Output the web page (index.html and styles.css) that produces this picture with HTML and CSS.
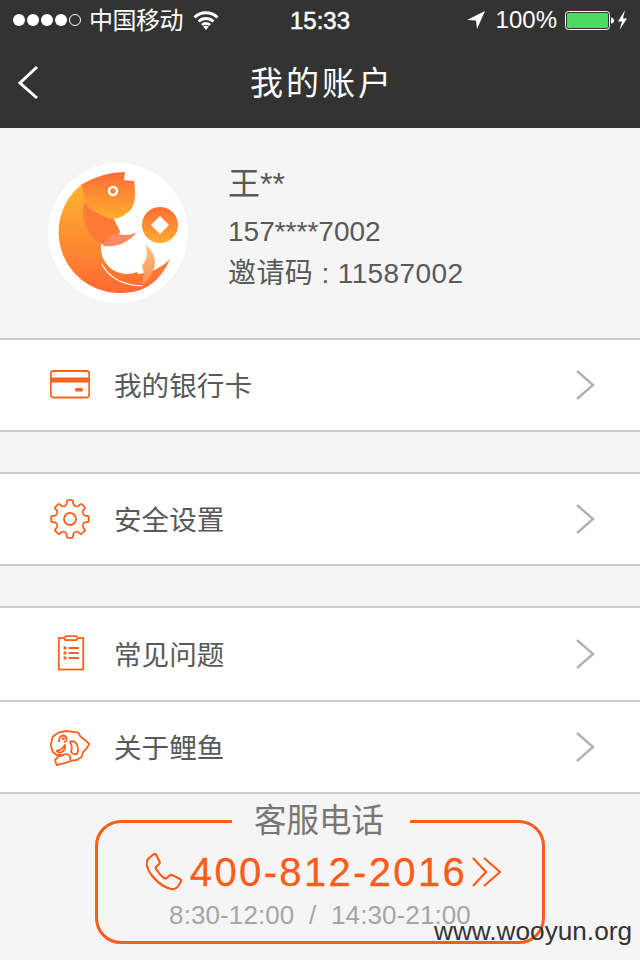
FILE: index.html
```html
<!DOCTYPE html>
<html lang="zh-CN">
<head>
    <meta charset="UTF-8">
    <title>我的账户</title>
    <link rel="stylesheet" href="styles.css">
</head>
<body>

<header class="top">
    <div class="status">
        <div class="status-left">
            <span class="dot"></span><span class="dot"></span><span class="dot"></span><span class="dot"></span><span class="dot empty"></span>
            <span class="carrier">中国移动</span>
            <svg class="wifi" width="26" height="20" viewBox="0 0 26 20">
                <path d="M1.5 7.5a16.5 16.5 0 0 1 23 0" />
                <path d="M5.5 11.5a11 11 0 0 1 15 0" />
                <path d="M9 15a6 6 0 0 1 8 0" />
                <polygon class="fill" points="13,20 10.2,16.6 13,15.4 15.8,16.6" />
            </svg>
        </div>
        <div class="time">15:33</div>
        <div class="status-right">
            <svg width="20" height="20" viewBox="0 0 20 20">
                <polygon class="fill" points="1,10 19,1 11,19 10,10.5" />
            </svg>
            <span class="percent">100%</span>
            <svg width="64" height="22" viewBox="0 0 64 22">
                <rect class="batt" x="0.5" y="2.5" width="44" height="18" rx="3" />
                <rect class="batt-level" x="2" y="4" width="41" height="15" rx="1.5" />
                <path class="fill" d="M46 8.5q3 .5 3 3t-3 3z" />
                <polygon class="fill" points="60,1 53,12.5 57,12.5 54.5,21 62,9.5 58,9.5" />
            </svg>
        </div>
    </div>
    <div class="nav">
        <svg class="back" width="22" height="36" viewBox="0 0 22 36">
            <polyline points="19,2 2,18 19,33" />
        </svg>
        <h1>我的账户</h1>
    </div>
</header>

<section class="profile">
    <svg class="avatar" width="140" height="140" viewBox="0 0 140 140">
        <defs>
            <linearGradient id="bodyGrad" x1="0" y1="0" x2="0" y2="1">
                <stop offset="0" stop-color="#ffb22e" />
                <stop offset="1" stop-color="#ff6a33" />
            </linearGradient>
            <linearGradient id="headGrad" x1="0" y1="0" x2="0" y2="1">
                <stop offset="0" stop-color="#ff6c38" />
                <stop offset="1" stop-color="#ffae2e" />
            </linearGradient>
            <linearGradient id="coinGrad" x1="0" y1="0" x2="0" y2="1">
                <stop offset="0" stop-color="#ff6c35" />
                <stop offset="1" stop-color="#ffac2e" />
            </linearGradient>
            <linearGradient id="finGrad" x1="0" y1="0" x2="0" y2="1">
                <stop offset="0" stop-color="#ffc58c" />
                <stop offset="1" stop-color="#ff8a45" />
            </linearGradient>
        </defs>
        <circle cx="70" cy="70" r="70" fill="#fff" />
        <path fill="url(#bodyGrad)" d="M33.700 21.300A61 61 0 0 0 78.700 129.700Q108 128 122 96.300Q108 110 90 111L60 60Z" />
        <circle cx="79" cy="85" r="26" fill="#fff" />
        <path fill="url(#finGrad)" d="M97 81Q110 92 106 105Q102 118 92 123Q98 112 94 103Q102 92 97 81Z" />
        <path fill="none" stroke="#fff" stroke-width="1.200" d="M53.700 101Q65 122 95 123" />
        <path fill="#ff7a35" d="M36 40C32 60 44 83 64 83C68 83 70 76 72 68L60 45Z" />
        <path fill="#ff8a62" d="M55 83Q75 85 88.700 69.700Q76 74 68 70Q58 74 55 83Z" />
        <path fill="url(#headGrad)" d="M33.700 21.300Q55 9 77 9L76 17L86 18C89 35 86 46 79 50Q70 58 60 55Q42 48 37 40Z" />
        <circle cx="65" cy="28" r="4" fill="none" stroke="#fff" stroke-width="2.400" />
        <circle cx="112" cy="62" r="18" fill="url(#coinGrad)" />
        <polygon fill="#fff" points="112,53 121,62 112,71 103,62" />
    </svg>
    <div class="info">
        <div class="name">王**</div>
        <div class="phone">157****7002</div>
        <div class="code">邀请码 : 11587002</div>
    </div>
</section>

<div class="group">
    <a class="row">
        <svg class="icon" width="40" height="40" viewBox="0 0 40 40">
            <rect x="0.8" y="6" width="38.4" height="26.5" rx="2.5" />
            <rect class="orange" x="1" y="12.5" width="38" height="5" />
            <rect class="orange" x="25" y="23" width="8" height="3.5" rx="1.5" />
        </svg>
        <span class="label">我的银行卡</span>
        <svg class="arrow" width="20" height="32" viewBox="0 0 20 32">
            <polyline points="2,2 18,16 2,30" />
        </svg>
    </a>
</div>

<div class="group">
    <a class="row">
        <svg class="icon" width="40" height="40" viewBox="0 0 40 40">
            <defs>
                <path id="tooth" d="M14.6 7.1Q16.2 6.2 16.6 5L17 2Q17 1.2 18 1.2L22 1.2Q23 1.2 23 2L23.4 5Q23.8 6.2 25.4 7.1" />
            </defs>
            <use href="#tooth" />
            <use href="#tooth" transform="rotate(45 20 20)" />
            <use href="#tooth" transform="rotate(90 20 20)" />
            <use href="#tooth" transform="rotate(135 20 20)" />
            <use href="#tooth" transform="rotate(180 20 20)" />
            <use href="#tooth" transform="rotate(225 20 20)" />
            <use href="#tooth" transform="rotate(270 20 20)" />
            <use href="#tooth" transform="rotate(315 20 20)" />
            <circle cx="20" cy="20" r="6" />
        </svg>
        <span class="label">安全设置</span>
        <svg class="arrow" width="20" height="32" viewBox="0 0 20 32">
            <polyline points="2,2 18,16 2,30" />
        </svg>
    </a>
</div>

<div class="group">
    <a class="row row-first">
        <svg class="icon" width="40" height="40" viewBox="0 0 40 40">
            <rect x="8.8" y="4" width="24.4" height="31.5" />
            <rect class="clip" x="14.5" y="2.2" width="13" height="4" rx="2" />
            <circle class="orange" cx="15" cy="14" r="1.7" />
            <circle class="orange" cx="15" cy="19" r="1.7" />
            <circle class="orange" cx="15" cy="24" r="1.7" />
            <path d="M18.5 14H29M18.5 19H29M18.5 24H29" />
        </svg>
        <span class="label">常见问题</span>
        <svg class="arrow" width="20" height="32" viewBox="0 0 20 32">
            <polyline points="2,2 18,16 2,30" />
        </svg>
    </a>
    <a class="row">
        <svg class="icon doodle" width="40" height="40" viewBox="0 -3 40 40">
            <path d="M.7 15L2.700 6.700L8.300 2.700L16.700 1L28.300 2.700L30.700 6.700L35 10L39.300 14L36.700 18.300L33.300 21.700L31.700 26.700L26.700 30L21.700 30.700L16.700 32.700L6.700 35L5 30L8.300 26.700L13.300 25L6.700 25L2.700 21.700Z" />
            <path d="M9 12Q9 6 13 5.500Q17 6 16.500 10Q16 12 14 12M12 9.500Q13.500 7.500 14.500 9.500" />
            <path d="M6.700 20.700Q12 20 15 15Q16 20 11 22.500Q8 23 6.700 20.700Z" />
            <path d="M20 11.700Q25 10 27 15Q29 20 27 24Q23 25 21 22Q23 17 20 11.700Z" />
            <path d="M10 26Q15 23 19 25Q21 27 20 30" />
        </svg>
        <span class="label">关于鲤鱼</span>
        <svg class="arrow" width="20" height="32" viewBox="0 0 20 32">
            <polyline points="2,2 18,16 2,30" />
        </svg>
    </a>
</div>

<section class="service">
    <h2>客服电话</h2>
    <div class="tel">
        <svg class="tel-icon" width="37" height="38" viewBox="0 0 37 38">
            <path d="M3 5C1 7 0 9 1 13C3 21 13 33 25 36C29 37 31 35 33 32L35 28Q35.500 26.500 34 26L26 22Q24.500 21.500 23.500 22.500L21 25Q19.500 26 18 25C14 22 12 19 10 16Q9 14.500 10.500 13.500L13 11Q14 10 13.500 8.500L10 1.500Q9 .5 7.500 1.500Z" />
        </svg>
        <span class="tel-num">400-812-2016</span>
        <svg class="tel-more" width="30" height="30" viewBox="0 0 30 30">
            <path d="M1 1L14 15L1 29M12 1L28 15L12 29" />
        </svg>
    </div>
    <div class="hours">8:30-12:00&nbsp; / &nbsp;14:30-21:00</div>
</section>

<div class="watermark">www.wooyun.org</div>

</body>
</html>
```

FILE: styles.css
```css
body {
    font-family: "Liberation Sans", "Noto Sans CJK SC", sans-serif;
    margin: 0;
    height: 960px;
    overflow: hidden;
    position: relative;
    background-color: #f5f5f5;
    color: #555;
}

svg {
    display: block;
    flex-shrink: 0;
}

.top {
    background-color: #333;
    color: #fff;
    height: 128px;
}

.status {
    height: 40px;
    display: grid;
    grid-template-columns: 1fr auto 1fr;
    align-items: center;
    font-size: 24px;
}

.status-left {
    display: flex;
    align-items: center;
    padding-left: 13px;
}

.dot {
    width: 12px;
    height: 12px;
    margin-right: 2px;
    border-radius: 50%;
    background-color: #fff;
}

.dot.empty {
    width: 10px;
    height: 10px;
    background: none;
    border: 1px solid #fff;
}

.carrier {
    margin: 0 0 4px 6px;
    letter-spacing: -0.5px;
}

.wifi {
    margin-left: 10px;
}

.wifi path {
    fill: none;
    stroke: #fff;
    stroke-width: 3;
}

.fill {
    fill: #fff;
}

.time {
    -webkit-text-stroke: 0.5px #fff;
    padding-top: 2px;
}

.status-right {
    display: flex;
    align-items: center;
    justify-content: flex-end;
    padding-right: 11px;
}

.percent {
    margin: 0 8px 0 10px;
}

.batt {
    fill: none;
    stroke: #fff;
}

.batt-level {
    fill: #4cd964;
}

.nav {
    height: 82px;
    padding-bottom: 6px;
    display: flex;
    align-items: center;
    justify-content: center;
    position: relative;
}

.back {
    position: absolute;
    left: 18px;
    top: 25px;
}

.back polyline {
    fill: none;
    stroke: #fff;
    stroke-width: 3;
}

h1 {
    margin: 0;
    padding-left: 4px;
    font-size: 33px;
    font-weight: normal;
    letter-spacing: 3px;
}

.profile {
    height: 210px;
    display: flex;
    align-items: center;
    padding-left: 48px;
}

.avatar {
    margin-right: 40px;
}

.info {
    font-size: 28px;
    line-height: 42px;
    color: #595959;
    margin-top: -8px;
}

.name {
    font-size: 32px;
    margin-bottom: 6px;
}

.code {
    letter-spacing: 0.4px;
}

.group {
    border-top: 2px solid #ccc;
    border-bottom: 2px solid #ccc;
    background-color: #fff;
}

.group + .group {
    margin-top: 40px;
}

.row {
    height: 90px;
    display: flex;
    align-items: center;
    padding: 0 45px 0 50px;
    font-size: 27.6px;
    color: #595959;
}

.row-first {
    height: 92px;
}

.row + .row {
    border-top: 2px solid #ccc;
}

.icon {
    margin-right: 24px;
    fill: none;
    stroke: #fb6220;
    stroke-width: 1.8;
}

.icon .orange {
    fill: #fb6220;
    stroke: none;
}

.icon .clip {
    fill: #fff;
}

.doodle {
    stroke-linejoin: round;
}

.label {
    flex: 1;
    margin-bottom: 2px;
}

.arrow polyline {
    fill: none;
    stroke: #b3b3b3;
    stroke-width: 2.5;
}

.service {
    margin: 26px 95px 0;
    height: 124px;
    box-sizing: border-box;
    border: 3px solid #fb5c1a;
    border-radius: 26px;
    position: relative;
    text-align: center;
}

h2 {
    position: absolute;
    left: 134px;
    top: -22px;
    width: 178px;
    box-sizing: border-box;
    padding-right: 4px;
    margin: 0;
    background-color: #f5f5f5;
    font-size: 32.5px;
    line-height: 40px;
    font-weight: normal;
    color: #777;
}

.tel {
    display: flex;
    align-items: center;
    justify-content: center;
    margin-top: 27px;
    padding-left: 8px;
    height: 44px;
    color: #fb5c1a;
}

.tel-icon {
    margin-right: 7px;
}

.tel-icon path,
.tel-more path {
    fill: none;
    stroke: #fb5c1a;
    stroke-width: 2.2;
}

.tel-num {
    font-size: 40px;
    letter-spacing: 2.35px;
    -webkit-text-stroke: 0.3px #fb5c1a;
}

.tel-more {
    margin-left: 5px;
}

.hours {
    font-size: 26px;
    line-height: 30px;
    letter-spacing: 0.1px;
    margin-top: 6px;
    color: #a5a5a5;
}

.watermark {
    position: absolute;
    right: 8px;
    top: 917px;
    font-size: 26.2px;
    line-height: 28px;
    color: #333;
}
```
